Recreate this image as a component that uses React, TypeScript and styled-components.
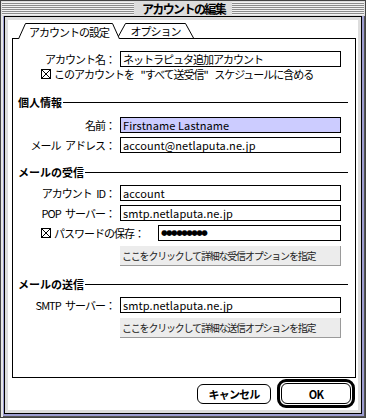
import React from 'react';
import styled, { createGlobalStyle } from 'styled-components';

const CJK = `"Noto Sans CJK JP", "Noto Sans", sans-serif`;

const Global = createGlobalStyle`
  html, body { margin: 0; padding: 0; background: #fff; }
  body { font-family: ${CJK}; color: #000; }
  * { box-sizing: border-box; }
`;

const Window = styled.div`
  width: 366px;
  height: 418px;
  border: 1px solid #444;
  display: flex;
  flex-direction: column;
  background: #dddddd;
`;

const TitleBar = styled.div`
  height: 15px;
  flex-shrink: 0;
  display: flex;
  align-items: center;
  justify-content: center;
  background:
    repeating-linear-gradient(to bottom, #f2f2f2 0 1px, #8c8c8c 1px 2px) 1px 1px / calc(100% - 2px) 13px no-repeat,
    #dddddd;
`;

const Title = styled.div`
  height: 15px;
  padding: 0 7px 0 8px;
  background: #dddddd;
  font-family: ${CJK};
  font-weight: 700;
  font-size: 12px;
  letter-spacing: -1.6px;
  line-height: 15px;
`;

const Frame = styled.div`
  flex: 1;
  display: flex;
  padding: 0 3px 3px 3px;
  background: #9d9dd0;
  box-shadow: inset 2px 0 0 #e6e6e6, inset -1px -1px 0 #555;
`;

const Body = styled.div`
  flex: 1;
  display: flex;
  flex-direction: column;
  border: 1px solid #000;
  background: #fff;
  box-shadow: inset 0 0 0 3px #dddddd;
  padding: 6px 5px 5px 7px;
`;

const TabRow = styled.div`
  display: flex;
  align-items: flex-start;
  height: 16px;
  margin: 0 0 -1px 6px;
  position: relative;
  z-index: 1;
`;

const Tab = styled.div<{ $w: number; $active?: boolean }>`
  position: relative;
  z-index: ${(p) => (p.$active ? 2 : 1)};
  width: ${(p) => p.$w}px;
  height: ${(p) => (p.$active ? 16 : 15)}px;
  margin-left: ${(p) => (p.$active ? 0 : -3)}px;
  display: flex;
  align-items: center;
  justify-content: center;
  padding-top: 1px;
  font-family: ${CJK};
  font-size: 11px;
  letter-spacing: -1px;
  line-height: 14px;
`;

const TabShape = styled.svg`
  position: absolute;
  left: 0;
  top: 0;
`;

const TabText = styled.span`
  position: relative;
`;

const Panel = styled.div`
  flex: 1;
  border: 1px solid #000;
  display: flex;
  flex-direction: column;
  padding: 0 7px 0 5px;
`;

const Stack = styled.div<{ $mt: number }>`
  margin-top: ${(p) => p.$mt}px;
`;

const FieldRow = styled.div`
  display: grid;
  grid-template-columns: 97px 221px;
  column-gap: 5px;
  align-items: center;
  height: 16px;
`;

const Label = styled.div`
  font-family: ${CJK};
  font-size: 11px;
  letter-spacing: -1px;
  word-spacing: 3px;
  text-align: right;
  white-space: pre;
  line-height: 16px;
`;

const Field = styled.div<{ $hl?: boolean; $jp?: boolean; $w?: number }>`
  height: 16px;
  width: ${(p) => (p.$w ? `${p.$w}px` : 'auto')};
  border: 1px solid #000;
  background: ${(p) => (p.$hl ? '#ccccff' : '#fff')};
  font-family: ${CJK};
  font-size: 11px;
  letter-spacing: ${(p) => (p.$jp ? '-1px' : '0.1px')};
  line-height: 14px;
  padding-left: 2px;
  white-space: nowrap;
  overflow: hidden;
`;

const Dots = styled.span`
  font-family: "DejaVu Sans", sans-serif;
  font-size: 7.5px;
  letter-spacing: -1.5px;
  line-height: 14px;
  vertical-align: top;
`;

const CheckRow = styled.div<{ $h: number }>`
  display: flex;
  align-items: center;
  height: ${(p) => p.$h}px;
  width: 323px;
  padding-left: 23px;
  gap: 3px;
`;

const CheckText = styled.span`
  font-family: ${CJK};
  font-size: 11px;
  letter-spacing: -1px;
  word-spacing: 5px;
  white-space: pre;
  line-height: 14px;
  flex: 1;
`;

const SectionHeader = styled.div`
  display: flex;
  align-items: center;
  height: 13px;
`;

const SectionTitle = styled.span`
  font-family: ${CJK};
  font-weight: 700;
  font-size: 11px;
  line-height: 13px;
  white-space: nowrap;
`;

const Rule = styled.span`
  flex: 1;
  height: 1px;
  background: #000;
  margin-left: 1px;
`;

const DetailButton = styled.div`
  margin-left: 102px;
  width: 221px;
  height: 20px;
  background: #ececec;
  border-right: 1px solid #9a9a9a;
  border-bottom: 1px solid #9a9a9a;
  font-family: ${CJK};
  font-size: 10px;
  letter-spacing: -1.2px;
  line-height: 19px;
  padding-left: 2px;
  color: #222;
  white-space: nowrap;
`;

const Footer = styled.div`
  margin-top: 1px;
  height: 29px;
  display: flex;
  align-items: center;
  justify-content: flex-end;
  gap: 6px;
  padding-right: 1px;
  flex-shrink: 0;
`;

const Button = styled.div<{ $w?: number }>`
  width: ${(p) => (p.$w ? `${p.$w}px` : 'auto')};
  flex: ${(p) => (p.$w ? '0 0 auto' : '1')};
  height: ${(p) => (p.$w ? '20px' : 'auto')};
  border: 1px solid #000;
  border-radius: 6px;
  display: flex;
  align-items: center;
  justify-content: center;
  font-family: ${CJK};
  font-weight: 700;
  font-size: 11px;
  letter-spacing: -0.8px;
  background: #fff;
`;

const DefaultRing = styled.div`
  width: 78px;
  height: 29px;
  border: 3px solid #000;
  border-radius: 9px;
  padding: 1px;
  display: flex;
`;

const CheckBox = () => (
  <svg width="10" height="10" viewBox="0 0 10 10" shapeRendering="crispEdges" style={{ flexShrink: 0 }}>
    <rect x="0.5" y="0.5" width="9" height="9" fill="#fff" stroke="#000" />
    <path d="M1 1L9 9M9 1L1 9" stroke="#000" strokeWidth="1" shapeRendering="auto" />
  </svg>
);

const Row = ({ label, children }: { label: string; children: React.ReactNode }) => (
  <FieldRow>
    <Label>{label}</Label>
    {children}
  </FieldRow>
);

const Section = ({ title }: { title: string }) => (
  <SectionHeader>
    <SectionTitle>{title}</SectionTitle>
    <Rule />
  </SectionHeader>
);

export default function App() {
  return (
    <>
      <Global />
      <Window>
        <TitleBar>
          <Title>アカウントの編集</Title>
        </TitleBar>
        <Frame>
          <Body>
            <TabRow>
              <Tab $w={102} $active>
                <TabShape width="102" height="16" viewBox="0 0 102 16">
                  <path d="M0.5 16 L7.5 0.5 L94.5 0.5 L101.5 16 Z" fill="#fff" />
                  <path d="M0.5 16 L7.5 0.5 L94.5 0.5 L101.5 16" fill="none" stroke="#000" />
                </TabShape>
                <TabText>アカウントの設定</TabText>
              </Tab>
              <Tab $w={77}>
                <TabShape width="77" height="15" viewBox="0 0 77 15">
                  <path d="M0.5 15 L8.5 0.5 L68.5 0.5 L76.5 15 Z" fill="#fff" />
                  <path d="M0.5 15 L8.5 0.5 L68.5 0.5 L76.5 15" fill="none" stroke="#000" />
                </TabShape>
                <TabText>オプション</TabText>
              </Tab>
            </TabRow>
            <Panel>
              <Stack $mt={12}>
                <Row label="アカウント名：">
                  <Field $jp>ネットラピュタ追加アカウント</Field>
                </Row>
              </Stack>
              <Stack $mt={1}>
                <CheckRow $h={12}>
                  <CheckBox />
                  <CheckText>このアカウントを "すべて送受信" スケジュールに含める</CheckText>
                </CheckRow>
              </Stack>
              <Stack $mt={16}>
                <Section title="個人情報" />
              </Stack>
              <Stack $mt={8}>
                <Row label="名前：">
                  <Field $hl>Firstname Lastname</Field>
                </Row>
              </Stack>
              <Stack $mt={4}>
                <Row label="メール アドレス：">
                  <Field>account@netlaputa.ne.jp</Field>
                </Row>
              </Stack>
              <Stack $mt={13}>
                <Section title="メールの受信" />
              </Stack>
              <Stack $mt={6}>
                <Row label="アカウント ID：">
                  <Field>account</Field>
                </Row>
              </Stack>
              <Stack $mt={4}>
                <Row label="POP サーバー：">
                  <Field>smtp.netlaputa.ne.jp</Field>
                </Row>
              </Stack>
              <Stack $mt={4}>
                <CheckRow $h={16}>
                  <CheckBox />
                  <CheckText>パスワードの保存：</CheckText>
                  <Field $w={183}>
                    <Dots>●●●●●●●●●</Dots>
                  </Field>
                </CheckRow>
              </Stack>
              <Stack $mt={5}>
                <DetailButton>ここをクリックして詳細な受信オプションを指定</DetailButton>
              </Stack>
              <Stack $mt={12}>
                <Section title="メールの送信" />
              </Stack>
              <Stack $mt={6}>
                <Row label="SMTP サーバー：">
                  <Field>smtp.netlaputa.ne.jp</Field>
                </Row>
              </Stack>
              <Stack $mt={5}>
                <DetailButton>ここをクリックして詳細な送信オプションを指定</DetailButton>
              </Stack>
            </Panel>
            <Footer>
              <Button $w={74}>キャンセル</Button>
              <DefaultRing>
                <Button>OK</Button>
              </DefaultRing>
            </Footer>
          </Body>
        </Frame>
      </Window>
    </>
  );
}
